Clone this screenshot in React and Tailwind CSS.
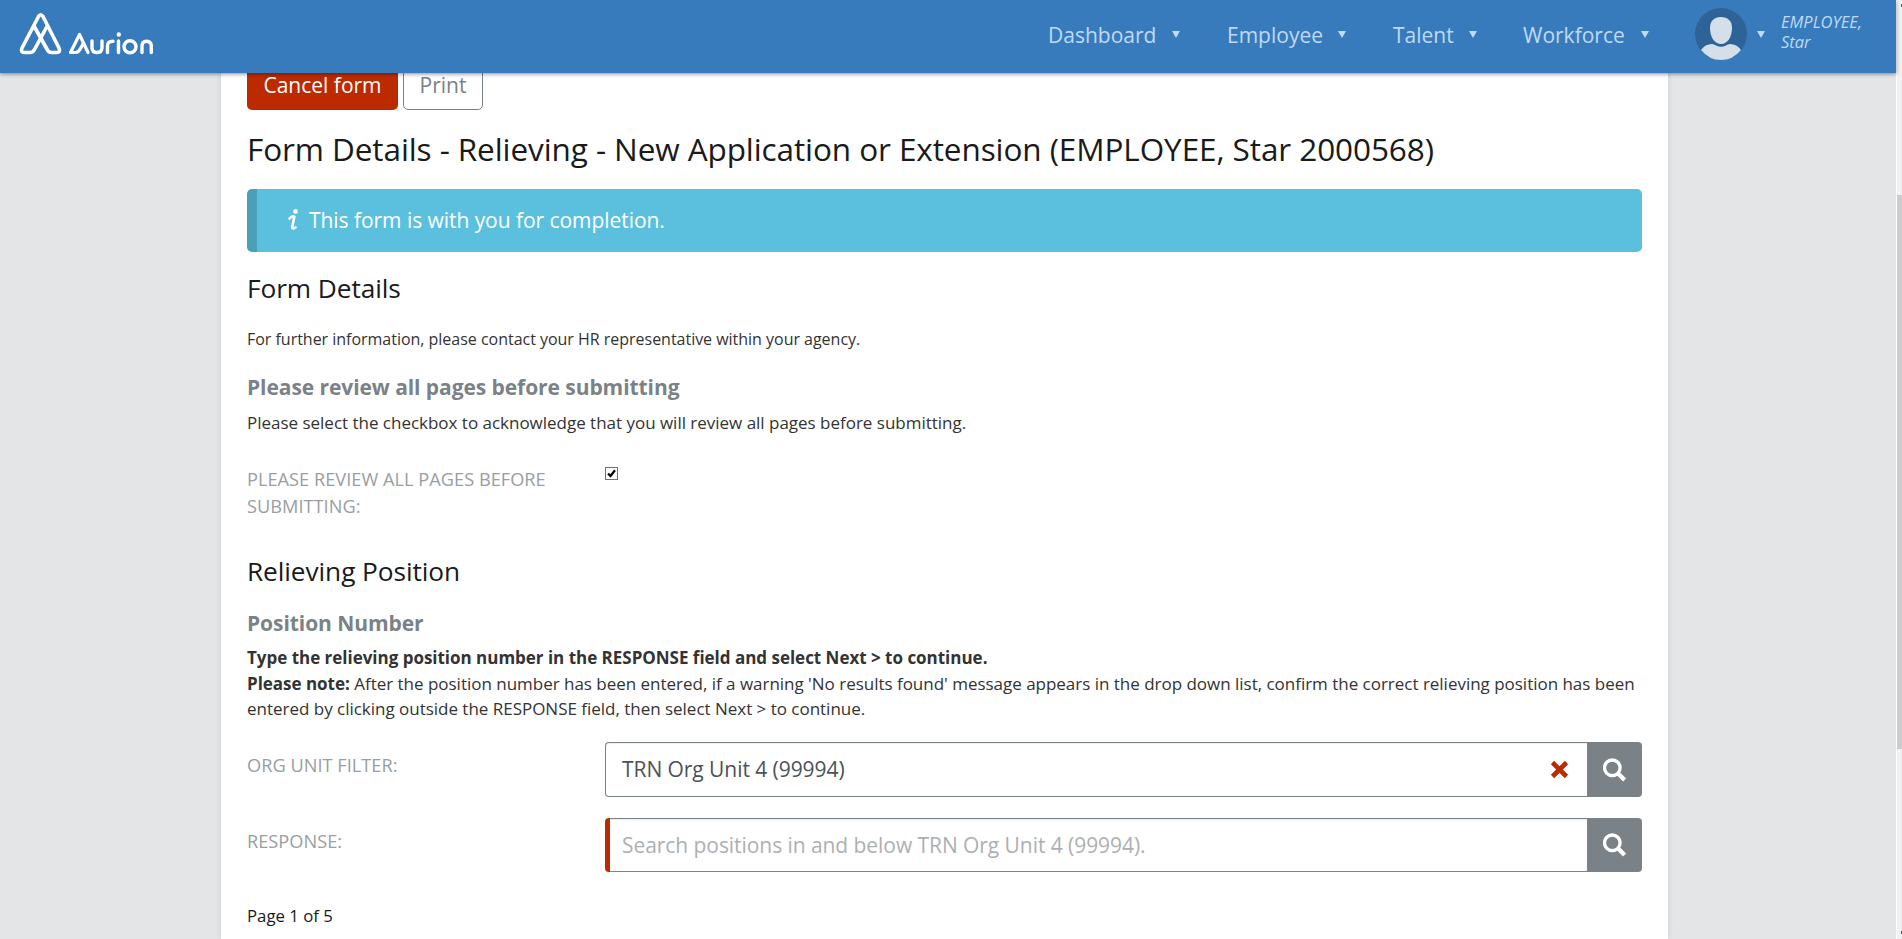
import React from "react";

function Logo() {
  return (
    <div className="flex h-[73px] w-[160px] items-start pl-[19px] pt-[12px]">
      <svg width="136" height="44" viewBox="0 0 136 44" fill="none" stroke="#fff" strokeLinecap="round" strokeLinejoin="round">
        <path strokeWidth="3.600" d="M19.500 4.500Q21.700 0.900 24 4.500L40 36Q42 40.500 37.500 40.500H32.500Q29.500 40.500 28.200 37.500L15 14M28.500 13.500L15.500 37.500Q14 40.500 11 40.500H5.500Q1.200 40.500 3 36L19.500 4.500" />
        <path strokeWidth="3.200" d="M69 40.500L60.500 22.500L51.500 40.500H56.500Q59.500 40.500 61.500 36.500L64.500 31" />
        <path strokeWidth="3.400" d="M73 29V35.500Q73 40.500 78 40.500Q83 40.500 83 35.500V29M88.500 40.500V34Q88.500 29 94 29.200M99.500 29V40.500M123 40.500V34Q123 29.200 127.500 29.200Q132.300 29.200 132.300 34V40.500" />
        <circle cx="111" cy="34.800" r="6" strokeWidth="3.400" />
        <circle cx="99.800" cy="22.500" r="2.200" fill="#fff" stroke="none" />
      </svg>
    </div>
  );
}

function Caret({ className = "" }) {
  return (
    <svg width="8" height="7" viewBox="0 0 8 7" className={className}>
      <path d="M0 0H8L4 7Z" fill="#c3dcf4" />
    </svg>
  );
}

function NavItem({ label, className }) {
  return (
    <div className={`flex shrink-0 items-center justify-between ${className}`}>
      <span className="pt-[1px] text-[21px] leading-7">{label}</span>
      <Caret />
    </div>
  );
}

function Avatar() {
  return (
    <svg width="52" height="52" viewBox="0 0 52 52" className="shrink-0">
      <circle cx="26" cy="26" r="26" fill="#2d6396" />
      <path d="M26 9C33 9 37 13 37 20C37 29 32.500 36 26 36C19.500 36 15 29 15 20C15 13 19 9 26 9Z" fill="#d5dfea" />
      <path d="M6 42Q10 36 17 36Q19 36 21 37.500Q26 40 31 37.500Q33 36 35 36Q42 36 46 42Q38 52 26 52Q14 52 6 42Z" fill="#d5dfea" />
    </svg>
  );
}

function SearchIcon() {
  return (
    <svg width="24" height="24" viewBox="0 0 24 24" fill="none" stroke="#fff">
      <circle cx="9.300" cy="9.800" r="7.800" strokeWidth="3.300" />
      <path d="M14.600 15L21.600 22" strokeWidth="4.300" />
    </svg>
  );
}

function SearchButton() {
  return (
    <button className="flex w-[55px] items-center justify-center rounded-r-[4px] bg-[#7b8287]">
      <SearchIcon />
    </button>
  );
}

function Header() {
  return (
    <header className="relative z-10 flex h-[73px] w-[1896px] justify-between bg-[#387bbc] text-[#bfdaf3] shadow-[0_1px_4px_rgba(0,0,0,0.45)]">
      <Logo />
      <nav className="flex h-[68px] items-center">
        <NavItem label="Dashboard" className="w-[132px]" />
        <NavItem label="Employee" className="ml-[47px] w-[119px]" />
        <NavItem label="Talent" className="ml-[47px] w-[84px]" />
        <NavItem label="Workforce" className="ml-[46px] w-[126px]" />
        <div className="ml-[46px] flex items-center">
          <Avatar />
          <Caret className="ml-[10px]" />
          <p className="ml-[16px] mt-[-4px] w-[115px] text-[16.5px] italic leading-[20px]">
            EMPLOYEE,
            <br />
            Star
          </p>
        </div>
      </nav>
    </header>
  );
}

export default function App() {
  return (
    <div className="flex h-[939px] w-[1902px] overflow-hidden bg-[#e4e5e7] font-['Open_Sans',sans-serif] text-[#333]">
      <div className="w-[1896px] shrink-0">
        <Header />
        <main className="ml-[221px] flow-root h-[866px] w-[1447px] bg-white px-[26px] shadow-[0_0_6px_rgba(0,0,0,0.1)]">
          <div className="-mt-[13px] flex h-[50px] items-stretch gap-[5px] text-[21px]">
            <button className="w-[151px] rounded-[5px] bg-[#bc2a00] pt-[2px] text-white">Cancel form</button>
            <button className="w-[80px] rounded-[5px] border border-[#7b8287] bg-white pt-[2px] text-[#7b8287]">Print</button>
          </div>

          <h1 className="mt-[19px] whitespace-nowrap text-[31.5px] leading-[40px] tracking-[-0.09px] text-[#1a1a1a]">
            Form Details - Relieving - New Application or Extension (EMPLOYEE, Star 2000568)
          </h1>

          <div className="mt-[20px] flex h-[63px] items-center rounded-[5px] border-l-[10px] border-[#4a9fb9] bg-[#5bc0de] pl-[31px] text-[21px] tracking-[-0.05px] text-white">
            <svg width="11" height="22" viewBox="0 0 11 22" className="-mt-[1px] mr-[10px]">
              <circle cx="7.500" cy="2.400" r="2.300" fill="#fff" />
              <path d="M1.500 9.500Q4 6.500 6.400 7.600L4.200 18Q4 20.800 7.500 18.500" fill="none" stroke="#fff" strokeWidth="2.600" strokeLinecap="round" strokeLinejoin="round" />
            </svg>
            <span className="pt-[1px]">This form is with you for completion.</span>
          </div>

          <h2 className="mt-[18px] text-[26.25px] leading-[36px] tracking-[-0.08px] text-[#1a1a1a]">Form Details</h2>
          <p className="mt-[21px] text-[16px] leading-[25px] tracking-[-0.02px]">
            For further information, please contact your HR representative within your agency.
          </p>

          <h3 className="mt-[21px] text-[21px] font-bold leading-[28px] tracking-[-0.07px] text-[#7b8287]">
            Please review all pages before submitting
          </h3>
          <p className="mt-[9px] text-[17px] leading-[25px] tracking-[-0.015px]">
            Please select the checkbox to acknowledge that you will review all pages before submitting.
          </p>

          <div className="mt-[31px] flex items-start text-[18.2px] leading-[27px] tracking-[0.02px] text-[#999ea2]">
            <label className="w-[358px] shrink-0">
              PLEASE REVIEW ALL PAGES BEFORE
              <br />
              SUBMITTING:
            </label>
            <span className="mt-[1px] flex h-[13px] w-[13px] items-center justify-center border border-[#707070] bg-white">
              <svg width="9" height="9" viewBox="0 0 9 9">
                <path d="M1 4.500L3.500 7L8 1.300" fill="none" stroke="#000" strokeWidth="2.200" />
              </svg>
            </span>
          </div>

          <h2 className="mt-[33px] text-[26.25px] leading-[36px] tracking-[-0.08px] text-[#1a1a1a]">Relieving Position</h2>
          <h3 className="mt-[20px] text-[21px] font-bold leading-[28px] tracking-[-0.07px] text-[#7b8287]">Position Number</h3>
          <p className="mt-[8px] whitespace-nowrap text-[17px] leading-[25.5px] tracking-[-0.018px]">
            <b>Type the relieving position number in the RESPONSE field and select Next &gt; to continue.</b>
            <br />
            <b>Please note:</b> After the position number has been entered, if a warning 'No results found' message
            appears in the drop down list, confirm the correct relieving position has been
            <br />
            entered by clicking outside the RESPONSE field, then select Next &gt; to continue.
          </p>

          <div className="mt-[20.5px] flex h-[55px]">
            <label className="w-[358px] shrink-0 pt-[10px] text-[18.2px] leading-[27px] tracking-[0.02px] text-[#999ea2]">ORG UNIT FILTER:</label>
            <div className="flex flex-1 items-center justify-between rounded-l-[4px] border border-r-0 border-[#7b8287] pl-[16px] pr-[18px] text-[21px] tracking-[-0.06px] text-[#4d5256] shadow-[inset_0_1px_1px_rgba(0,0,0,0.08)]">
              <span className="pt-[1px]">TRN Org Unit 4 (99994)</span>
              <svg width="19" height="19" viewBox="0 0 19 19">
                <path d="M2.500 2.500L16.500 16.500M16.500 2.500L2.500 16.500" stroke="#bc2a00" strokeWidth="4.600" />
              </svg>
            </div>
            <SearchButton />
          </div>

          <div className="mt-[21px] flex h-[54px]">
            <label className="w-[358px] shrink-0 pt-[10px] text-[18.2px] leading-[27px] tracking-[0.02px] text-[#999ea2]">RESPONSE:</label>
            <div className="flex flex-1 rounded-l-[4px] border-l-[5px] border-[#bc2a00]">
              <div className="flex flex-1 items-center border-y border-[#7b8287] pl-[12px] pt-[2px] text-[21px] tracking-[-0.06px] text-[#adb0b3] shadow-[inset_0_1px_1px_rgba(0,0,0,0.08)]">
                Search positions in and below TRN Org Unit 4 (99994).
              </div>
            </div>
            <SearchButton />
          </div>

          <p className="mt-[31px] text-[16.8px] leading-[25px] text-[#1a1a1a]">Page 1 of 5</p>
        </main>
      </div>

      <div className="flex w-[6px] shrink-0 flex-col items-end border-l border-white bg-[#f1f1f1]">
        <div className="mt-[4px] h-[3px] w-px bg-[#505050]" />
        <div className="mt-[188px] h-[554px] w-full bg-[#cdcdcd]" />
        <div className="mt-[182px] h-[3px] w-px bg-[#505050]" />
      </div>
    </div>
  );
}
